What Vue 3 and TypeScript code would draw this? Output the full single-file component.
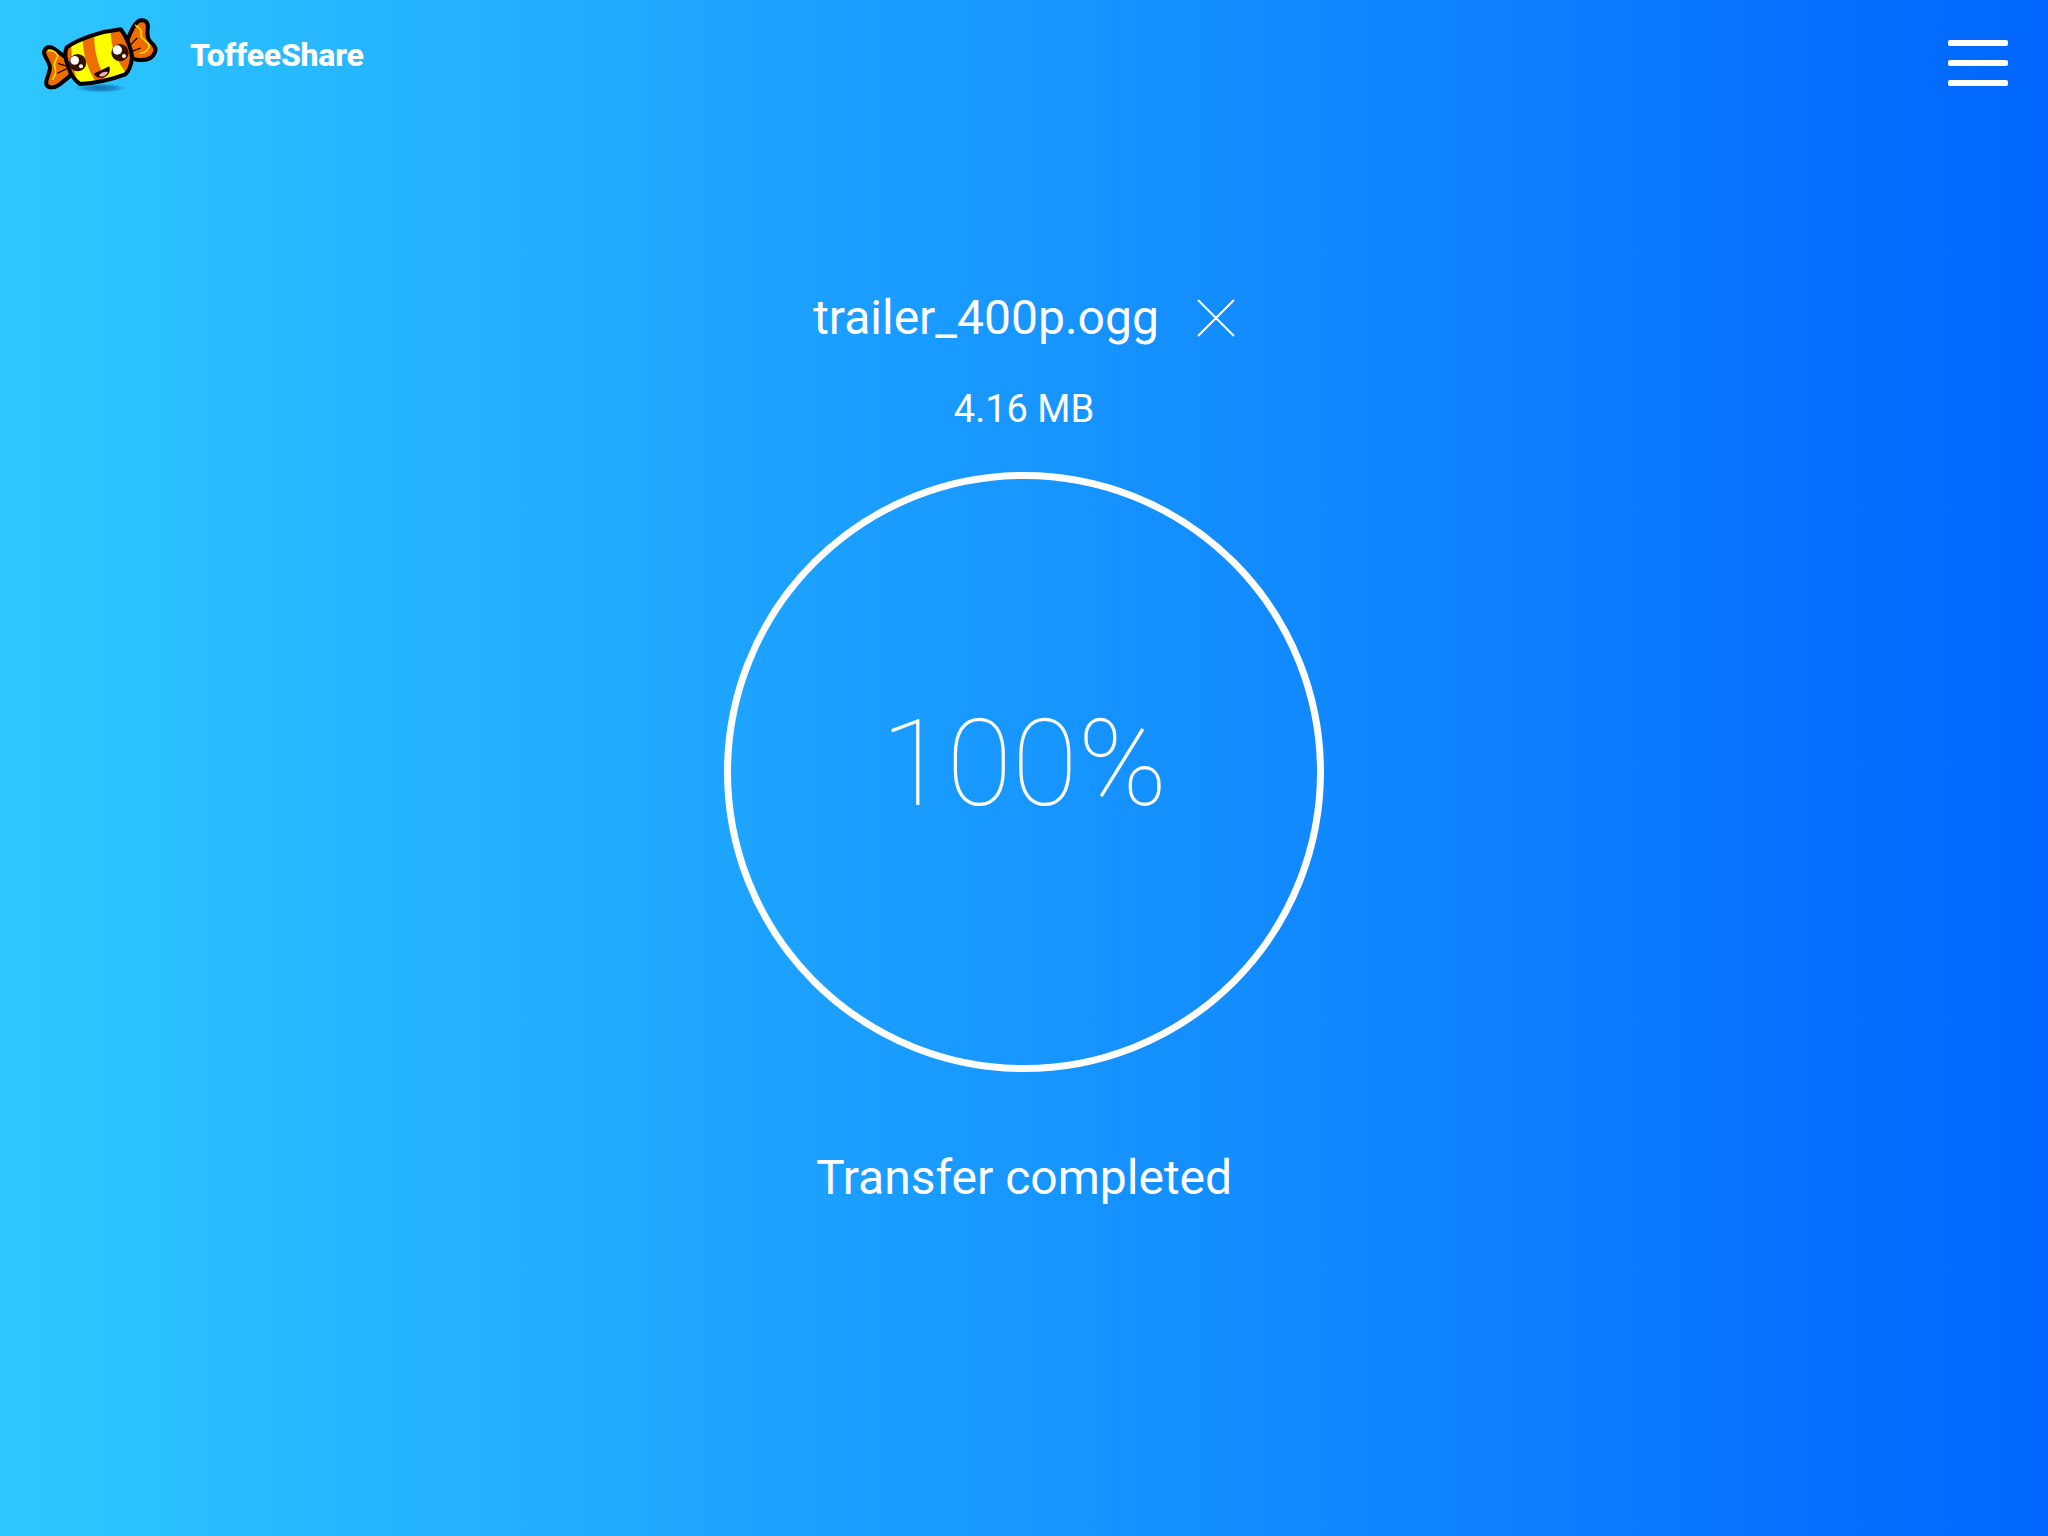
<script setup lang="ts">
const fileName: string = 'trailer_400p.ogg'
const fileSize: string = '4.16 MB'
const percent: number = 100
const bodyPath: string =
  'M110 112 C150 85 215 64 272 58 C287 75 304 115 306 142 C304 166 296 184 286 193 C240 210 195 220 150 222 C135 212 121 192 114 168 C107 150 103 128 110 112 Z'
</script>

<template>
  <div class="page">
    <header class="topbar">
      <div class="brand">
        <svg class="candy" viewBox="0 0 405 270" width="135" height="90" aria-hidden="true">
          <defs>
            <clipPath id="bodyClip">
              <path :d="bodyPath" />
            </clipPath>
            <radialGradient id="shadowGrad">
              <stop offset="0" stop-color="#0a5f99" stop-opacity="0.85" />
              <stop offset="0.6" stop-color="#0a6aa8" stop-opacity="0.55" />
              <stop offset="1" stop-color="#1080c0" stop-opacity="0" />
            </radialGradient>
          </defs>
          <ellipse cx="212" cy="234" rx="78" ry="14" fill="url(#shadowGrad)" />
          <path d="M112 146 L72 116 C58 106 44 112 42 127 C42 140 60 156 60 174 C58 194 46 208 49 223 C55 236 74 234 88 224 C104 212 120 198 132 186 Z" fill="#ef6c00" stroke="#000" stroke-width="12" stroke-linejoin="round" />
          <path d="M55 122 C66 120 78 126 84 138 C78 150 70 158 74 170 C80 182 76 196 68 208" fill="none" stroke="#ffeb00" stroke-width="4.5" stroke-linecap="round" stroke-linejoin="round" />
          <path d="M84 160 L108 168 M82 190 L110 176" stroke="#000" stroke-width="3.5" fill="none" />
          <path d="M290 96 C300 70 314 34 332 31 C350 29 356 42 353 56 C351 70 352 84 360 94 C372 104 380 115 375 127 C367 148 346 153 320 149 C308 147 300 138 296 132 Z" fill="#ef6c00" stroke="#000" stroke-width="12" stroke-linejoin="round" />
          <path d="M316 46 C330 52 336 62 333 76 C333 88 350 92 358 104 C358 118 345 128 332 130" fill="none" stroke="#ffeb00" stroke-width="4.5" stroke-linecap="round" stroke-linejoin="round" />
          <path d="M302 104 L322 84 M306 124 L332 114" stroke="#000" stroke-width="3.5" fill="none" />
          <g clip-path="url(#bodyClip)">
            <rect x="90" y="40" width="230" height="190" fill="#ef6c00" />
            <path d="M126 80 L158 72 C156 125 170 175 205 228 L150 228 C128 185 120 130 126 80 Z" fill="#ffff00" />
            <path d="M194 55 L242 50 C240 105 256 150 296 198 L232 218 C204 170 188 115 194 55 Z" fill="#ffff00" />
          </g>
          <path :d="bodyPath" fill="none" stroke="#000" stroke-width="12" stroke-linejoin="round" />
          <circle cx="143" cy="158" r="26" fill="#3a1200" />
          <circle cx="134" cy="151" r="13" fill="#fff" />
          <circle cx="153" cy="169" r="6" fill="#fff" />
          <circle cx="270" cy="128" r="26" fill="#3a1200" />
          <circle cx="262" cy="120" r="14" fill="#fff" />
          <circle cx="282" cy="138" r="6" fill="#fff" />
          <path d="M192 191 C206 184 224 176 238 169 C243 185 234 201 218 203 C205 205 196 200 192 191 Z" fill="#1a0500" />
          <path d="M207 198 C211 187 224 184 234 186 C230 197 219 203 207 198 Z" fill="#f7a8b8" />
        </svg>
        <span class="brand-name">ToffeeShare</span>
      </div>
      <button class="menu" type="button" aria-label="Menu">
        <span class="bar"></span>
        <span class="bar"></span>
        <span class="bar"></span>
      </button>
    </header>

    <main class="transfer">
      <div class="file-row">
        <span class="file-name">{{ fileName }}</span>
        <svg class="close" viewBox="0 0 38 38" width="38" height="38" aria-hidden="true">
          <path d="M1.5 1.5 L36.5 36.5 M36.5 1.5 L1.5 36.5" stroke="#fff" stroke-width="2" stroke-linecap="round" />
        </svg>
      </div>
      <div class="file-size">{{ fileSize }}</div>
      <div class="ring">
        <span class="percent">{{ percent }}%</span>
      </div>
      <div class="status">Transfer completed</div>
    </main>
  </div>
</template>

<style>
html, body { margin: 0; padding: 0; }
</style>

<style scoped>
.page {
  width: 2048px;
  height: 1536px;
  overflow: hidden;
  display: flex;
  flex-direction: column;
  background: linear-gradient(90deg, #2ec7ff 0%, #0066ff 100%);
  color: #fff;
  font-family: Roboto, "Liberation Sans", sans-serif;
}
.topbar {
  display: flex;
  justify-content: space-between;
  align-items: flex-start;
  height: 270px;
  padding: 10px 40px 0 30px;
  box-sizing: border-box;
}
.brand {
  display: flex;
  align-items: flex-start;
  gap: 25px;
}
.candy { display: block; }
.brand-name {
  font-size: 32px;
  font-weight: 800;
  letter-spacing: -0.25px;
  line-height: 38px;
  margin-top: 26px;
}
.menu {
  display: flex;
  flex-direction: column;
  gap: 14px;
  margin-top: 30px;
  padding: 0;
  border: 0;
  background: none;
}
.bar {
  display: block;
  width: 60px;
  height: 6px;
  border-radius: 2px;
  background: #fff;
}
.transfer {
  display: flex;
  flex-direction: column;
  align-items: center;
}
.file-row {
  display: flex;
  align-items: center;
  gap: 38px;
  height: 96px;
}
.file-name {
  font-size: 48px;
  line-height: 96px;
}
.close { display: block; }
.file-size {
  font-size: 38px;
  line-height: 48px;
  margin-top: 19px;
}
.ring {
  width: 600px;
  height: 600px;
  box-sizing: border-box;
  margin-top: 39px;
  border: 7px solid #fff;
  border-radius: 50%;
  display: flex;
  align-items: center;
  justify-content: center;
}
.percent {
  font-size: 120px;
  font-weight: 100;
  line-height: 140px;
  position: relative;
  top: -8px;
}
.status {
  font-size: 48px;
  line-height: 60px;
  margin-top: 76px;
}
</style>
